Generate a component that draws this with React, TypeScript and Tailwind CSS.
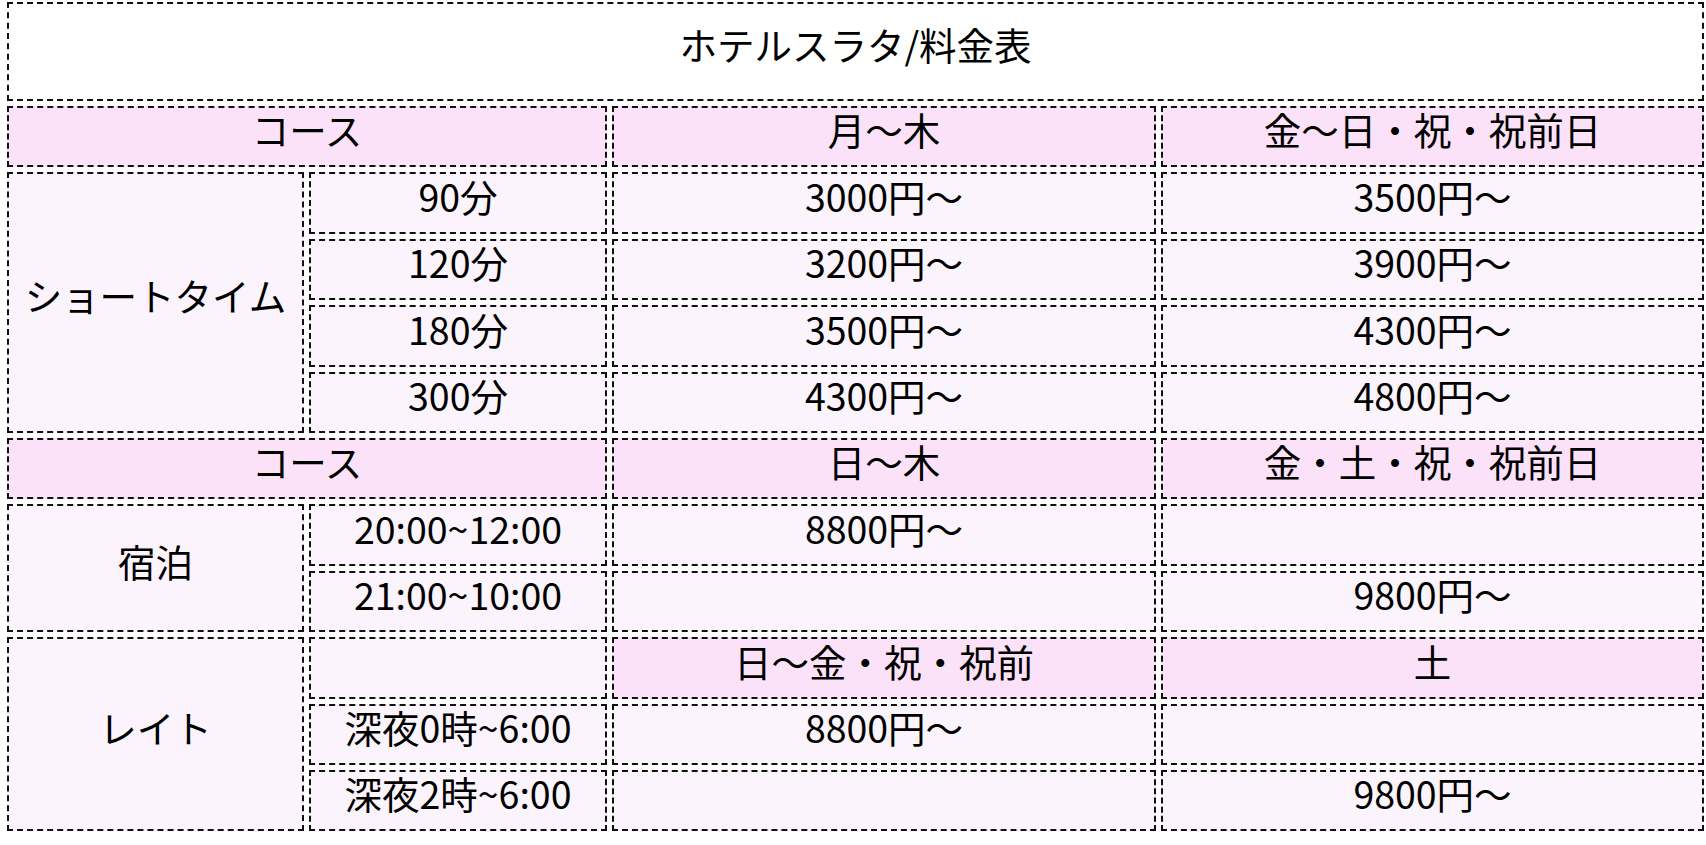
const cell =
  'flex items-center justify-center border-2 border-dashed border-[#111] pb-[15px] text-[37.5px] leading-none text-black';
const body = `${cell} bg-[#fcf4fc]`;
const head = `${cell} bg-[#fbe2f9]`;

type Row = { c2: string; c3: string; c4: string; h3?: boolean; h4?: boolean };

export default function App() {
  const shortRows = [
    { min: '90分', a: '3000円〜', b: '3500円〜' },
    { min: '120分', a: '3200円〜', b: '3900円〜' },
    { min: '180分', a: '3500円〜', b: '4300円〜' },
    { min: '300分', a: '4300円〜', b: '4800円〜' },
  ];

  const stayRows: Row[] = [
    { c2: '20:00~12:00', c3: '8800円〜', c4: '' },
    { c2: '21:00~10:00', c3: '', c4: '9800円〜' },
  ];

  const lateRows: Row[] = [
    { c2: '', c3: '日〜金・祝・祝前', c4: '土', h3: true, h4: true },
    { c2: '深夜0時~6:00', c3: '8800円〜', c4: '' },
    { c2: '深夜2時~6:00', c3: '', c4: '9800円〜' },
  ];

  return (
    <div
      className="min-h-screen bg-white pl-[7px] pt-[2px]"
      style={{ fontFamily: '"Noto Sans CJK JP", "Noto Sans", sans-serif' }}
    >
      <div className="grid w-[1697px] grid-cols-[297px_298px_544px_543px] grid-rows-[99px_repeat(11,61.4px)] gap-[5px]">
        <div className={`${cell} col-span-4 bg-white`}>ホテルスラタ/料金表</div>

        <div className={`${head} col-span-2`}>コース</div>
        <div className={head}>月〜木</div>
        <div className={head}>金〜日・祝・祝前日</div>

        <div className={`${body} row-span-4`}>ショートタイム</div>
        {shortRows.map((r) => (
          <div key={r.min} className="contents">
            <div className={body}>{r.min}</div>
            <div className={body}>{r.a}</div>
            <div className={body}>{r.b}</div>
          </div>
        ))}

        <div className={`${head} col-span-2`}>コース</div>
        <div className={head}>日〜木</div>
        <div className={head}>金・土・祝・祝前日</div>

        <div className={`${body} row-span-2`}>宿泊</div>
        {stayRows.map((r, i) => (
          <div key={i} className="contents">
            <div className={body}>{r.c2}</div>
            <div className={body}>{r.c3}</div>
            <div className={body}>{r.c4}</div>
          </div>
        ))}

        <div className={`${body} row-span-3`}>レイト</div>
        {lateRows.map((r, i) => (
          <div key={i} className="contents">
            <div className={body}>{r.c2}</div>
            <div className={r.h3 ? head : body}>{r.c3}</div>
            <div className={r.h4 ? head : body}>{r.c4}</div>
          </div>
        ))}
      </div>
    </div>
  );
}
